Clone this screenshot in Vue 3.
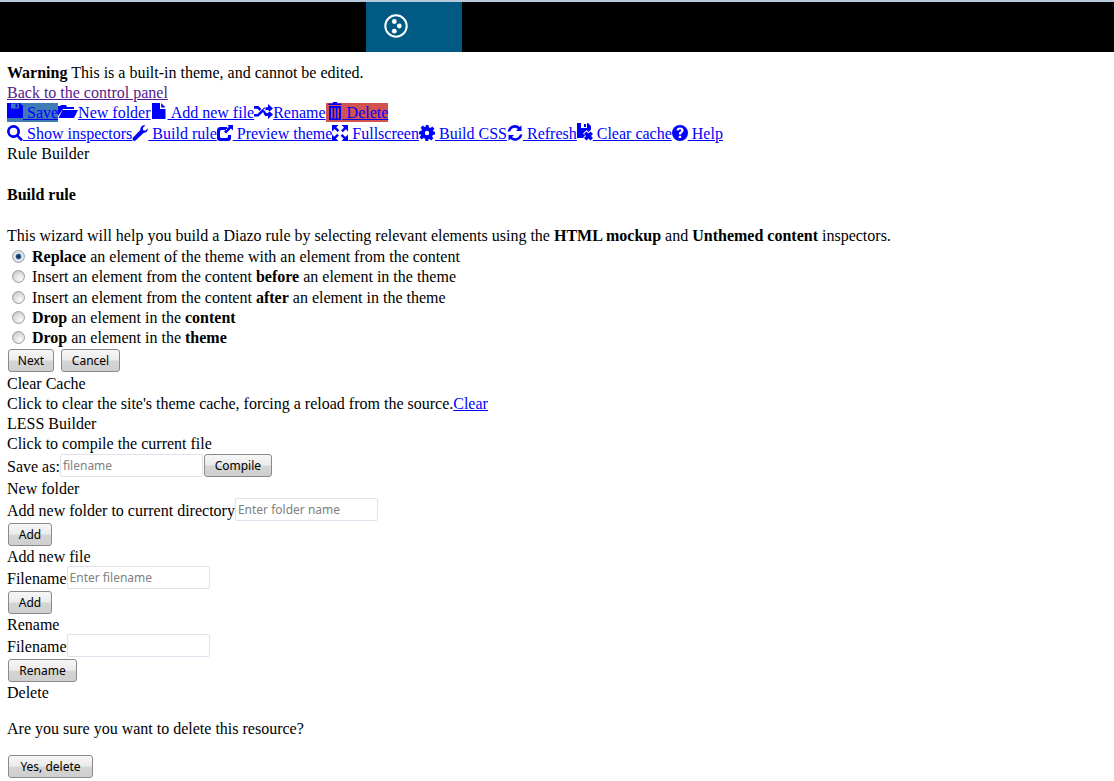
<script setup>
const row1 = [
  { id: 'save', w: 16, label: ' Save', cls: 'primary', d: 'M0 0h13l3 3v12H0zM4 0.500V5.500h8V0.500zM8.500 1.200h2v3.400h-2z' },
  { id: 'folder', w: 20, label: 'New folder', d: 'M0 13V3h2l1-1h5l1 2h7v2H5zM4.500 7H20l-4 8H0.500z' },
  { id: 'file', w: 17, label: ' Add new file', d: 'M1 0h8v6h5.500v10H1zM10.200 0l4.300 4.600h-4.300z' },
  { id: 'random', w: 19, label: 'Rename', d: 'M0 3h4.400l3 3-1.700 2-2.300-2.200H0zM9 7.200 11 5.200l1-.9h2V1l5 4.400-5 4.400V7h-1zM0 11h3.400L10.500 4.200 12 6 4.500 13.600H0zM9 9l1.400-1.600L12.400 10H14V7l5 4.500-5 4.400V13h-3z' },
  { id: 'trash', w: 17, label: ' Delete', cls: 'danger', d: 'M3 4h12v14H3zM5 6v10.500h1.600V6zM8.200 6v10.500h1.600V6zM11.400 6v10.500H13V6zM2.500 1.500h4L7 0h4l.5 1.500h4V3h-13z' }
]
const row2 = [
  { id: 'search', w: 16, label: ' Show inspectors', d: 'M6.500 0a6.500 6.500 0 0 1 5.300 10.200l4.200 4.200-1.900 1.900-4.200-4.200A6.500 6.500 0 1 1 6.500 0zM6.500 2.700a3.800 3.800 0 1 0 0 7.600 3.800 3.800 0 0 0 0-7.600z' },
  { id: 'wrench', w: 16, label: ' Build rule', d: 'M15.700 3.200c.6 2.400-1.400 5-4.200 4.800L3.600 15.600c-1.800 1.200-4-.8-2.700-2.800L8.300 5C8 2 10.700-.4 13.300.4l-2.600 2.500.5 2.300 2.200.5z' },
  { id: 'share', w: 16, label: ' Preview theme', d: 'M3.500 2H10V5H4.500A1.500 1.500 0 0 0 3 6.500V11.500A1.500 1.500 0 0 0 4.500 13h5a1.500 1.500 0 0 0 1.500-1.500V10h3v3a3 3 0 0 1-3 3H3a3 3 0 0 1-3-3V5.500A3.500 3.500 0 0 1 3.500 2zM10.500 0 16 0v5.500l-2-2-5 5-2-2 5-5z' },
  { id: 'full', w: 16, label: ' Fullscreen', d: 'M9.500 0H16v6.500l-2.200-2.200-3 3-1.700-1.700 3-3zM0 9.500l2.200 2.200 3-3 1.700 1.700-3 3L6.500 16H0zM0 0h6.500L4.300 2.200l3 3-1.700 1.700-3-3L0 6.500zM16 16H9.500l2.200-2.200-3-3 1.700-1.700 3 3L16 9.500z' },
  { id: 'gear', w: 16, label: ' Build CSS', d: 'M6.500 0h3l.4 2.300 1.500.6 1.900-1.300 2.100 2.100-1.300 1.900.6 1.500L16 6.500v3l-2.300.4-.6 1.500 1.300 1.900-2.100 2.100-1.900-1.300-1.500.6L9.500 16h-3l-.4-2.300-1.500-.6-1.900 1.300-2.100-2.100 1.300-1.900-.6-1.500L0 9.500v-3l2.300-.4.6-1.500L1.600 2.700 3.700.6l1.900 1.300 1.500-.6zM8 5.800a2.200 2.200 0 1 0 0 4.400 2.200 2.200 0 0 0 0-4.400z' },
  { id: 'refresh', w: 16, label: ' Refresh', d: 'M8 0c2 0 3.600.8 4.800 2L14.500.3V6H9l2-2A4.800 4.800 0 0 0 3.200 6.500H.6A7.500 7.500 0 0 1 8 0zM15.400 9.500A7.500 7.500 0 0 1 3.200 14l-1.700 1.700V10H7l-2 2a4.800 4.800 0 0 0 7.800-2.500z' },
  { id: 'clear', w: 16, cls: 'raised', label: ' Clear cache', d: 'M0 0h4v5h6V0h1l3 3v3.500l-2.500 2.500L9.500 7 6 10.500l2 2L6 15H0zM7 1h2v3H7zM9.500 8.500 11.500 10.500 13.500 8.500 16 11l-2 2 2 2-2.500 2.500-2-2-2 2L7 15l2-2-2-2z' },
  { id: 'help', w: 16, label: ' Help', d: 'M8 0a8 8 0 1 1 0 16A8 8 0 0 1 8 0zM8 2.500c-2 0-3.300 1-3.500 2.800l2.200.3c.1-.8.600-1.200 1.300-1.200s1.200.4 1.200 1c0 .5-.3.800-.9 1.200-1 .7-1.400 1.300-1.400 2.400v.5h2.200v-.3c0-.5.200-.8.900-1.300 1-.7 1.600-1.400 1.600-2.600 0-1.700-1.400-2.800-3.600-2.800zM6.800 10.700V13h2.400v-2.300z' }
]
const rules = [
  { id: 'r1', checked: true, parts: [['b', 'Replace'], ['t', ' an element of the theme with an element from the content']] },
  { id: 'r2', parts: [['t', 'Insert an element from the content '], ['b', 'before'], ['t', ' an element in the theme']] },
  { id: 'r3', parts: [['t', 'Insert an element from the content '], ['b', 'after'], ['t', ' an element in the theme']] },
  { id: 'r4', parts: [['b', 'Drop'], ['t', ' an element in the '], ['b', 'content']] },
  { id: 'r5', parts: [['b', 'Drop'], ['t', ' an element in the '], ['b', 'theme']] }
]
</script>

<template>
  <header class="topbar">
    <div class="tile">
      <svg width="24" height="24" viewBox="0 0 24 24" class="logo">
        <circle cx="12" cy="12" r="10.700" fill="none" stroke="#fff" stroke-width="2" />
        <circle cx="10.300" cy="7.500" r="2.400" fill="#fff" />
        <circle cx="15.300" cy="12" r="2.400" fill="#fff" />
        <circle cx="10.300" cy="17.200" r="2.400" fill="#fff" />
      </svg>
    </div>
  </header>

  <main class="page">
    <div class="line"><b>Warning</b> This is a built-in theme, and cannot be edited.</div>
    <div class="line"><a class="visited">Back to the control panel</a></div>

    <nav class="bar">
      <a v-for="i in row1" :key="i.id" class="tool" :class="i.cls">
        <svg class="ico" :width="i.w" height="18" :viewBox="`0 0 ${i.w} 18`"><path :d="i.d" fill-rule="evenodd" /></svg>
        <span class="lbl">{{ i.label }}</span>
      </a>
    </nav>
    <nav class="bar second">
      <a v-for="i in row2" :key="i.id" class="tool" :class="i.cls">
        <svg class="ico" :width="i.w" height="18" :viewBox="`0 0 ${i.w} 18`"><path :d="i.d" fill-rule="evenodd" /></svg>
        <span class="lbl">{{ i.label }}</span>
      </a>
    </nav>

    <div class="line">Rule Builder</div>
    <p class="para"><b>Build rule</b></p>
    <div class="line">This wizard will help you build a Diazo rule by selecting relevant elements using the <b>HTML mockup</b> and <b>Unthemed content</b> inspectors.</div>

    <div class="wizard">
      <label v-for="r in rules" :key="r.id" class="radio-row">
        <input class="radio" type="radio" name="rule" :checked="r.checked" />
        <span><template v-for="(p, n) in r.parts" :key="n"><b v-if="p[0] === 'b'">{{ p[1] }}</b><template v-else>{{ p[1] }}</template></template></span>
      </label>
      <div class="wizard-actions">
        <button class="btn w46">Next</button>
        <button class="btn w59">Cancel</button>
      </div>
    </div>

    <section class="lower">
      <div class="line">Clear Cache</div>
      <div class="line">Click to clear the site's theme cache, forcing a reload from the source.<a class="link">Clear</a></div>
      <div class="line">LESS Builder</div>
      <div class="line">Click to compile the current file</div>
      <div class="field compile-field"><span class="field-label">Save as:</span><input class="input" placeholder="filename" /><button class="btn compile">Compile</button></div>

      <div class="line">New folder</div>
      <div class="field"><span class="field-label">Add new folder to current directory</span><input class="input" placeholder="Enter folder name" /></div>
      <div class="actions"><button class="btn add">Add</button></div>

      <div class="line">Add new file</div>
      <div class="field"><span class="field-label">Filename</span><input class="input" placeholder="Enter filename" /></div>
      <div class="actions"><button class="btn add">Add</button></div>

      <div class="line">Rename</div>
      <div class="field"><span class="field-label">Filename</span><input class="input" /></div>
      <div class="actions"><button class="btn rename">Rename</button></div>

      <div class="line">Delete</div>
      <p class="para confirm">Are you sure you want to delete this resource?</p>
      <div class="delete-actions"><button class="btn yes">Yes, delete</button></div>
    </section>
  </main>
</template>

<style scoped>
.topbar {
  height: 50px;
  background: #000;
  border-top: 2px solid #b7c9dc;
  padding-left: 366px;
}
.tile {
  width: 96px;
  height: 50px;
  background: #005a84;
  display: flex;
  align-items: center;
  padding-left: 18px;
  box-sizing: border-box;
}
.logo {
  margin-top: -2px;
}
.page {
  padding: 10.600px 0 0 7px;
  font-family: "Liberation Serif", serif;
  font-size: 16px;
  line-height: 20.400px;
  color: #000;
}
.line {
  height: 20.400px;
  white-space: nowrap;
}
.visited {
  color: #551a8b;
  text-decoration: underline;
}
.link {
  color: #00f;
  text-decoration: underline;
}
.bar {
  display: flex;
  height: 20.400px;
}
.tool {
  display: flex;
  color: #00f;
  fill: #00f;
  height: 19px;
}
.lbl {
  white-space: pre;
  text-decoration: underline;
  line-height: 20.400px;
}
.ico {
  display: block;
}
.second .ico {
  margin-top: 1px;
}
.second .raised .ico {
  margin-top: -1px;
}
.primary {
  background: #3f7cb6;
}
.danger {
  background: #d2524f;
}
.danger .ico {
  margin-top: -1px;
}
.para {
  margin: 20.400px 0;
}
.wizard {
  padding-top: 0.800px;
  margin-bottom: 2px;
}
.radio-row {
  display: flex;
  height: 20.400px;
  align-items: flex-start;
}
.radio {
  appearance: none;
  width: 13px;
  height: 13px;
  margin: 3px 7px 0 5px;
  border: 1px solid #9a9ea3;
  border-radius: 50%;
  background: radial-gradient(circle at 65% 70%, #fafafa 0, #dcdcdc 55%, #b9b9b9 100%);
  box-sizing: border-box;
  flex: none;
}
.radio:checked {
  background: radial-gradient(circle, #12304e 0, #1d4f82 28%, #dfe6ee 42%, #cfd5db 100%);
}
.wizard-actions {
  display: flex;
  gap: 7px;
  padding-left: 1px;
}
.lower .line {
  height: 20px;
  line-height: 20px;
}
.field {
  display: flex;
  align-items: center;
  height: 23px;
  margin-top: -1px;
  white-space: nowrap;
}
.field-label {
  margin-top: 3px;
  line-height: 20px;
}
.compile-field {
  margin: 0 0 2px;
}
.actions {
  display: flex;
  padding: 2px 0 1px 1px;
}
.delete-actions {
  display: flex;
  padding-left: 1px;
}
.confirm {
  margin: 16px 0;
  line-height: 20px;
}
.input {
  width: 143px;
  height: 23px;
  box-sizing: border-box;
  border: 1px solid #dfe2ec;
  border-radius: 2px;
  padding: 0 2px;
  font-family: "Noto Sans", sans-serif;
  font-size: 12px;
  background: #fff;
  outline: none;
}
.input::placeholder {
  color: #808080;
}
.btn {
  height: 23px;
  box-sizing: border-box;
  border: 1px solid #8a8a8a;
  border-radius: 3px;
  background: linear-gradient(#f6f6f6 0, #ececec 45%, #d4d4d4 55%, #cfcfcf 100%);
  font-family: "Noto Sans", sans-serif;
  font-size: 12px;
  line-height: 19px;
  padding: 1px 0 0;
  color: #000;
}
.w46 { width: 46px; }
.w59 { width: 59px; }
.compile { width: 68px; margin-left: 1px; }
.add { width: 44px; }
.rename { width: 69px; }
.yes { width: 85px; }
</style>

<style>
html, body { background: #fff; }
</style>
